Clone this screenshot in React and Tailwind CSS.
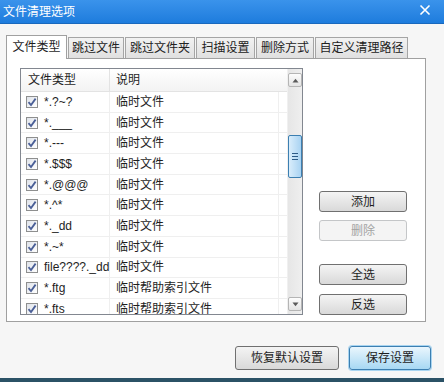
import React from "react";

const rows = [
  ["*.?~?", "临时文件"],
  ["*.___", "临时文件"],
  ["*.---", "临时文件"],
  ["*.$$$", "临时文件"],
  ["*.@@@", "临时文件"],
  ["*.^*", "临时文件"],
  ["*._dd", "临时文件"],
  ["*.~*", "临时文件"],
  ["file????._dd", "临时文件"],
  ["*.ftg", "临时帮助索引文件"],
  ["*.fts", "临时帮助索引文件"],
];

const tabs = [
  ["文件类型", "w-[61px]"],
  ["跳过文件", "w-[56px]"],
  ["跳过文件夹", "w-[70px]"],
  ["扫描设置", "w-[59px]"],
  ["删除方式", "w-[58px]"],
  ["自定义清理路径", "w-[93px]"],
];

function Check() {
  return (
    <div className="w-[12px] h-[12px] border border-[#8e8f8f] bg-gradient-to-br from-[#dfe3ea] to-[#ffffff] flex items-center justify-center shrink-0">
      <svg width="10" height="10" viewBox="0 0 10 10">
        <path d="M1.5 5.2 L4 8 L8.6 1.6" fill="none" stroke="#4a5f97" strokeWidth="1.8" />
      </svg>
    </div>
  );
}

function Btn({ children, disabled, primary, cls }) {
  let c =
    "h-[21px] w-[88px] rounded-[3px] border flex items-center justify-center text-[12px] ";
  if (disabled) c += "border-[#c4c6c8] bg-[#f4f4f4] text-[#a3a3a3]";
  else if (primary)
    c += "border-[#3c7fb1] bg-gradient-to-b from-[#eaf6fd] to-[#a7d8f3] text-[#1e1e1e]";
  else c += "border-[#707070] bg-gradient-to-b from-[#f4f4f4] to-[#d9d9d9] text-[#1e1e1e]";
  return <div className={c + " " + (cls || "")}>{children}</div>;
}

export default function App() {
  return (
    <div className="w-[444px] h-[382px] bg-[#f6f6f6] flex flex-col font-['Liberation_Sans','Noto_Sans_CJK_SC',sans-serif] text-[#1e1e1e] overflow-hidden">
      {/* Title bar */}
      <div className="h-[24px] shrink-0 bg-gradient-to-b from-[#3a93eb] to-[#1d7cdd] border-b border-[#1968bd] flex items-center justify-between pl-[3px] pr-[13px]">
        <span className="text-white text-[12px] leading-none">文件清理选项</span>
        <svg width="12" height="12" viewBox="0 0 12 12" className="-mt-[3px]">
          <path d="M1.5 1.5 L10.5 10.5 M10.5 1.5 L1.5 10.5" stroke="white" strokeWidth="1.6" />
        </svg>
      </div>

      {/* Tabs */}
      <div className="mt-[11px] ml-[6px] h-[24px] flex items-end gap-[1px] relative z-10">
        {tabs.map(([t, w], i) =>
          i === 0 ? (
            <div
              key={t}
              className={`${w} h-[24px] bg-white border-l border-t border-r border-[#a0a0a0] flex items-center justify-center text-[12px] pb-[1px]`}
            >
              {t}
            </div>
          ) : (
            <div
              key={t}
              className={`${w} h-[21px] mb-[1px] bg-gradient-to-b from-[#f2f2f2] to-[#e0e0e0] border-l border-t border-r border-[#a5a5a5] flex items-center justify-center text-[12px] text-[#222]`}
            >
              {t}
            </div>
          )
        )}
      </div>

      {/* Panel */}
      <div className="-mt-px ml-[6px] w-[420px] h-[264px] bg-white border border-[#a0a0a0] flex pl-[13px] pt-[9px] shrink-0">
        {/* List */}
        <div className="w-[283px] h-[247px] border border-[#828790] flex bg-white">
          <div className="flex-1 flex flex-col overflow-hidden">
            <div className="h-[23px] shrink-0 flex bg-gradient-to-b from-[#ffffff] to-[#f3f3f3] border-b border-[#e3e3e3] text-[12px]">
              <div className="w-[89px] border-r border-[#e3e3e3] flex items-center pl-[7px]">文件类型</div>
              <div className="flex-1 flex items-center pl-[6px]">说明</div>
            </div>
            {rows.map(([a, b], i) => (
              <div key={i} className="h-[20.7px] shrink-0 flex border-b border-[#efefef] text-[12px]">
                <div className="w-[89px] border-r border-[#efefef] flex items-center pl-[5px] gap-[6px] whitespace-nowrap">
                  <Check />
                  <span>{a}</span>
                </div>
                <div className="w-[169px] border-r border-[#efefef] flex items-center pl-[6px] whitespace-nowrap">{b}</div>
                <div className="flex-1" />
              </div>
            ))}
          </div>
          {/* Scrollbar */}
          <div className="w-[15px] bg-gradient-to-r from-[#e6e6e6] to-[#efefef] border-l border-[#f0f0f0] flex flex-col items-center pt-[4px] pb-[3px]">
            <div className="w-[14px] h-[14px] shrink-0 rounded-[2px] border border-[#b5b5b5] bg-gradient-to-b from-[#fdfdfd] to-[#e4e4e4] flex items-center justify-center">
              <svg width="7" height="5" viewBox="0 0 7 5">
                <path d="M0.5 4.5 L3.5 0.8 L6.5 4.5 Z" fill="#5a5a5a" />
              </svg>
            </div>
            <div className="h-[48px] shrink-0" />
            <div className="w-[14px] h-[43px] shrink-0 rounded-[2px] border border-[#3c7fb1] bg-gradient-to-r from-[#d9edfb] to-[#a9d3f2] flex flex-col items-center justify-center gap-[2px]">
              <div className="w-[6px] h-px bg-[#2c5a86]" />
              <div className="w-[6px] h-px bg-[#2c5a86]" />
              <div className="w-[6px] h-px bg-[#2c5a86]" />
            </div>
            <div className="flex-1" />
            <div className="w-[14px] h-[14px] shrink-0 rounded-[2px] border border-[#b5b5b5] bg-gradient-to-b from-[#fdfdfd] to-[#e4e4e4] flex items-center justify-center">
              <svg width="7" height="5" viewBox="0 0 7 5">
                <path d="M0.5 0.5 L3.5 4.2 L6.5 0.5 Z" fill="#5a5a5a" />
              </svg>
            </div>
          </div>
        </div>

        {/* Side buttons */}
        <div className="ml-[16px] flex flex-col">
          <Btn cls="mt-[123px]">添加</Btn>
          <Btn disabled cls="mt-[8px]">删除</Btn>
          <Btn cls="mt-[23px]">全选</Btn>
          <Btn cls="mt-[9px]">反选</Btn>
        </div>
      </div>

      {/* Bottom buttons */}
      <div className="mt-[24px] flex justify-end pr-[13px] gap-[10px]">
        <div className="h-[24px] w-[104px] rounded-[3px] border border-[#707070] bg-gradient-to-b from-[#f4f4f4] to-[#d9d9d9] flex items-center justify-center text-[12px]">
          恢复默认设置
        </div>
        <div className="h-[24px] w-[82px] rounded-[3px] border border-[#3c7fb1] bg-gradient-to-b from-[#eaf6fd] to-[#a7d8f3] flex items-center justify-center text-[12px] shadow-[0_0_0_1px_#a8d4f0]">
          保存设置
        </div>
      </div>

      <div className="flex-1" />
      <div className="h-[4px] shrink-0 bg-[#2b5266]" />
    </div>
  );
}
